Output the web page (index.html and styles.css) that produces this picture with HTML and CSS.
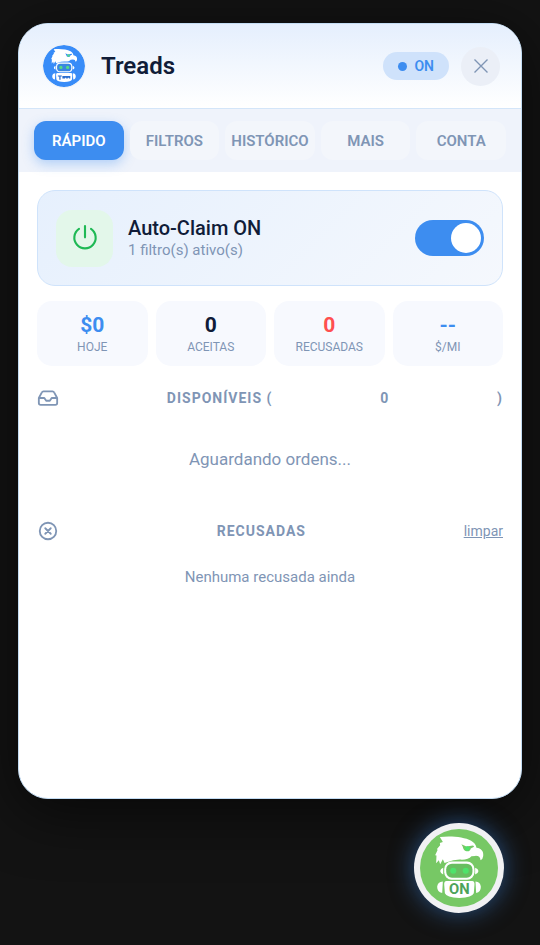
FILE: index.html
```html
<!DOCTYPE html>
<html lang="pt-BR">
<head>
  <meta charset="UTF-8" />
  <title>Treads</title>
  <meta name="viewport" content="width=device-width, initial-scale=1.0" />
  <link rel="stylesheet" href="styles.css">
</head>
<body>
  <!-- mascote: águia + robô -->
  <svg class="sprite" aria-hidden="true">
    <symbol id="mascot" viewBox="91 146 232 232">
      <path fill="#fff" d="M139 248 L140 225 L136 224 L143 209 L142 205 L151 194 L150 188 L159 185 L150 170 C180 166 222 169 243 181 C252 186 258 193 259 202 C272 203 281 212 279 226 Q278 236 271 239 Q270 225 255 226 L244 227 C238 235 226 238 209 237 L190 239 L164 247 L159 236 L151 251 L147 239 Z"/>
      <path fill="var(--skin)" d="M214 191 L229 198 L249 195 L252 199 L242 204 Q240 214 229 212 Q220 210 218 198 Z"/>
      <circle cx="232" cy="204" r="7" fill="var(--eye)"/>
      <path fill="#fff" d="M160 261 Q152 263 151 271 Q152 279 160 281 Z M255 261 Q264 263 265 271 Q264 279 255 281 Z"/>
      <rect x="163" y="243" width="90" height="54" rx="22" fill="#fff"/>
      <rect x="169" y="249" width="78" height="42" rx="17" fill="var(--face)"/>
      <circle cx="190" cy="270" r="9" fill="var(--eye)"/>
      <circle cx="227" cy="270" r="9" fill="var(--eye)"/>
      <path fill="#fff" d="M159 302 L157 336 Q142 334 142 318 Q143 303 159 302 Z M256 302 L258 336 Q272 334 272 318 Q271 303 256 302 Z"/>
      <path fill="#fff" d="M170 301 L246 301 Q254 302 253 312 L251 337 Q247 349 208 351 Q169 349 165 337 L163 312 Q162 302 170 301 Z"/>
    </symbol>
  </svg>

  <main class="panel">
    <header class="header">
      <svg class="logo" viewBox="0 0 232 232" role="img" aria-label="Treads">
        <circle cx="116" cy="116" r="116" fill="#388cf8"/>
        <use href="#mascot" x="0" y="0" width="232" height="232"/>
        <path fill="#2b6fd0" d="M82 168 h22 v6 h-7 v18 h-7 v-18 h-8 Z M107 171 h44 v14 h-8 v-4 h-6 v4 h-9 v-4 h-6 v4 h-15 Z"/>
      </svg>
      <h1>Treads</h1>
      <span class="status"><span class="dot"></span>ON</span>
      <button class="close" type="button" aria-label="Fechar">
        <svg viewBox="0 0 16 16" width="16" height="16"><path d="M1.500 1.500 L14.500 14.500 M14.500 1.500 L1.500 14.500"/></svg>
      </button>
    </header>

    <nav class="tabs">
      <button class="tab active" type="button">RÁPIDO</button>
      <button class="tab" type="button">FILTROS</button>
      <button class="tab" type="button">HISTÓRICO</button>
      <button class="tab" type="button">MAIS</button>
      <button class="tab" type="button">CONTA</button>
    </nav>

    <div class="content">
      <div class="claim">
        <span class="claim-icon">
          <svg viewBox="0 0 24 24" width="32" height="32"><path d="M12 3 V11.500 M7.500 5.200 a8 8 0 1 0 9 0"/></svg>
        </span>
        <div class="claim-text">
          <label class="claim-title" for="autoClaim">Auto-Claim ON</label>
          <div class="claim-sub">1 filtro(s) ativo(s)</div>
        </div>
        <input class="switch" type="checkbox" id="autoClaim" checked>
      </div>

      <div class="stats">
        <div class="stat"><strong class="blue">$0</strong><span>HOJE</span></div>
        <div class="stat"><strong>0</strong><span>ACEITAS</span></div>
        <div class="stat"><strong class="red">0</strong><span>RECUSADAS</span></div>
        <div class="stat"><strong class="blue">--</strong><span>$/MI</span></div>
      </div>

      <h2 class="section-title">
        <svg viewBox="0 0 24 24" width="22" height="22"><path d="M22 12 h-6 l-2 3 h-4 l-2 -3 H2 M5.300 5.800 L2 12 V17.500 a2 2 0 0 0 2 2 h16 a2 2 0 0 0 2 -2 V12 L18.700 5.800 a2 2 0 0 0 -1.800 -1.100 H7.100 a2 2 0 0 0 -1.800 1.100 z"/></svg>
        <span>DISPONÍVEIS (</span>
        <span>0</span>
        <span>)</span>
      </h2>
      <p class="empty empty-orders">Aguardando ordens...</p>

      <div class="section-title">
        <svg viewBox="0 0 24 24" width="22" height="22"><circle cx="12" cy="12" r="9"/><path d="M9 9 L15 15 M15 9 L9 15"/></svg>
        <h2>RECUSADAS</h2>
        <button class="clear" type="button">limpar</button>
      </div>
      <p class="empty">Nenhuma recusada ainda</p>
    </div>
  </main>

  <button class="fab" type="button" aria-label="Treads ON">
    <svg viewBox="0 0 232 232">
      <circle cx="116" cy="116" r="116" fill="#77c865"/>
      <use href="#mascot" x="0" y="0" width="232" height="232"/>
      <text x="117" y="194" text-anchor="middle">ON</text>
    </svg>
  </button>
</body>
</html>
```

FILE: styles.css
```css
:root {
  --blue: #3d8df0;
  --text: #101c38;
  --muted: #7f95b5;
  --line: #cfe3fb;
  --soft: #f7f9fe;
}

* {
  box-sizing: border-box;
}

body {
  margin: 0;
  min-height: 100vh;
  padding: 23px 18px 32px;
  display: flex;
  flex-direction: column;
  gap: 24px;
  background: #131313;
  color: var(--text);
  font-family: Roboto, sans-serif;
}

button {
  border: 0;
  padding: 0;
  font-family: inherit;
  cursor: pointer;
}

h1, h2, p {
  margin: 0;
}

.sprite {
  position: absolute;
  width: 0;
  height: 0;
}

.panel {
  flex: 1;
  background: #fff;
  border: 1px solid #c3dcf3;
  border-radius: 30px;
  overflow: hidden;
  box-shadow: 0 12px 60px rgba(0, 0, 0, 0.6);
}

/* cabeçalho */
.header {
  display: flex;
  align-items: center;
  height: 85px;
  padding: 0 21px 0 23px;
  background: linear-gradient(#e5effd, #fff);
  border-bottom: 1px solid #d3e5f9;
}

.logo {
  --skin: #388cf8;
  --face: #3a86e0;
  --eye: #55dc83;
  width: 44px;
  height: 44px;
  border: 1px solid #eef1f6;
  border-radius: 50%;
}

.header h1 {
  flex: 1;
  margin-left: 15px;
  font-size: 24px;
  font-weight: 600;
}

.status {
  display: flex;
  align-items: center;
  gap: 7px;
  height: 28px;
  padding: 0 15px;
  border-radius: 14px;
  background: #cfe2fb;
  color: var(--blue);
  font-size: 14px;
  font-weight: 600;
}

.dot {
  width: 9px;
  height: 9px;
  border-radius: 50%;
  background: var(--blue);
}

.close {
  display: grid;
  place-items: center;
  width: 39px;
  height: 39px;
  margin-left: 12px;
  border-radius: 50%;
  background: #ebeff7;
}

.close svg {
  fill: none;
  stroke: var(--muted);
  stroke-width: 1.4;
}

/* abas */
.tabs {
  display: grid;
  grid-template-columns: repeat(5, 1fr);
  gap: 6px;
  padding: 12px 15px;
  background: #eff3fb;
}

.tab {
  height: 39px;
  border-radius: 12px;
  background: #f3f6fb;
  color: var(--muted);
  font-size: 15px;
  font-weight: 600;
}

.tab.active {
  background: var(--blue);
  color: #fff;
  box-shadow: 0 4px 12px rgba(61, 141, 240, 0.35);
}

.content {
  padding: 18px;
}

/* auto-claim */
.claim {
  display: flex;
  align-items: center;
  height: 96px;
  padding: 0 18px;
  border: 1px solid var(--line);
  border-radius: 18px;
  background: linear-gradient(135deg, #e6f0fd, #f5f8fd);
}

.claim-icon {
  display: grid;
  place-items: center;
  width: 57px;
  height: 57px;
  border-radius: 16px;
  background: #e3f7ea;
}

.claim-icon svg {
  fill: none;
  stroke: #1fb955;
  stroke-width: 1.6;
  stroke-linecap: round;
}

.claim-text {
  flex: 1;
  margin-left: 15px;
}

.claim-title {
  display: block;
  font-size: 20px;
  font-weight: 500;
  line-height: 24px;
}

.claim-sub {
  color: var(--muted);
  font-size: 15px;
  line-height: 20px;
}

.switch {
  appearance: none;
  display: flex;
  align-items: center;
  width: 69px;
  height: 36px;
  margin: 0;
  padding: 3px;
  border-radius: 18px;
  background: #cbd5e1;
  cursor: pointer;
}

.switch::before {
  content: "";
  width: 30px;
  height: 30px;
  border-radius: 50%;
  background: #fff;
}

.switch:checked {
  justify-content: flex-end;
  background: var(--blue);
}

/* resumo */
.stats {
  display: grid;
  grid-template-columns: repeat(4, 1fr);
  gap: 8px;
  margin-top: 15px;
}

.stat {
  height: 65px;
  padding-top: 12px;
  border-radius: 15px;
  background: var(--soft);
  text-align: center;
}

.stat strong {
  display: block;
  font-size: 21px;
  line-height: 24px;
}

.stat span {
  display: block;
  color: var(--muted);
  font-size: 12px;
  line-height: 20px;
}

.stat .blue {
  color: var(--blue);
}

.stat .red {
  color: #ff4f4f;
}

/* listas */
.section-title {
  display: flex;
  align-items: center;
  justify-content: space-between;
  height: 20px;
  margin-top: 22px;
  color: var(--muted);
  font-size: 14px;
  font-weight: 700;
  letter-spacing: 1px;
}

.section-title h2 {
  font-size: 14px;
}

.section-title svg {
  fill: none;
  stroke: var(--muted);
  stroke-width: 2;
  stroke-linecap: round;
  stroke-linejoin: round;
}

.clear {
  background: none;
  color: var(--muted);
  font-size: 14px;
  text-decoration: underline;
}

.empty {
  padding: 24px 0;
  color: var(--muted);
  font-size: 15px;
  line-height: 24px;
  text-align: center;
}

.empty-orders {
  padding: 39px 0 28px;
  font-size: 17px;
}

/* botão flutuante */
.fab {
  --skin: #77c865;
  --face: #68be60;
  --eye: #4ee36a;
  align-self: flex-end;
  width: 90px;
  height: 90px;
  margin-right: 18px;
  padding: 6px;
  border-radius: 50%;
  background: #f1f1f3;
  box-shadow: 0 0 24px rgba(61, 141, 240, 0.5);
}

.fab svg {
  display: block;
  width: 100%;
  height: 100%;
}

.fab text {
  fill: #4da35a;
  font-size: 44px;
  font-weight: 700;
}
```
